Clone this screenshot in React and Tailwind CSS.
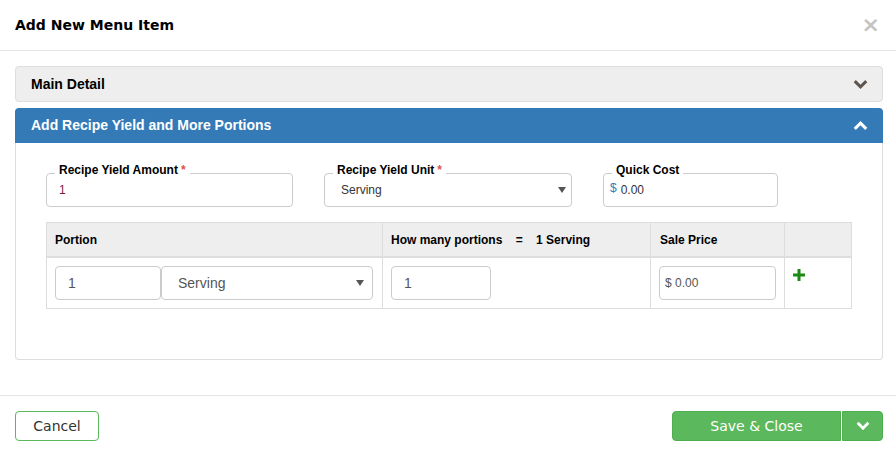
import React from "react";

const ChevronDown = ({ className }) => (
  <svg viewBox="0 0 16 16" className={className} fill="none" stroke="currentColor" strokeWidth="3.2" strokeLinecap="square">
    <path d="M3 5.5 L8 10.5 L13 5.5" />
  </svg>
);

const ChevronUp = ({ className }) => (
  <svg viewBox="0 0 16 16" className={className} fill="none" stroke="currentColor" strokeWidth="3.2" strokeLinecap="square">
    <path d="M3 10.5 L8 5.5 L13 10.5" />
  </svg>
);

const Caret = () => (
  <svg viewBox="0 0 8 6" className="w-[8px] h-[6px]" fill="#555">
    <path d="M0 0 H8 L4 6 Z" />
  </svg>
);

function FloatField({ label, required, width, children }) {
  return (
    <div className={`relative ${width}`}>
      <span className="absolute left-[9px] top-[-10px] bg-white px-[4px] text-[12px] font-bold leading-[14px] text-black">
        {label}
        {required && <span className="text-[#d9534f] ml-[3px]">*</span>}
      </span>
      <div className="h-[34px] border border-[#ccc] rounded-[4px] flex items-center">{children}</div>
    </div>
  );
}

export default function App() {
  return (
    <div className="w-[896px] h-[453px] bg-white flex flex-col" style={{ fontFamily: '"Liberation Sans", Arial, sans-serif' }}>
      {/* header */}
      <div className="h-[51px] border-b border-[#e5e5e5] flex items-center justify-between pl-[15px] pr-[16px] shrink-0">
        <h4 className="text-[14px] font-bold text-black" style={{ fontFamily: '"DejaVu Sans", Verdana, sans-serif' }}>
          Add New Menu Item
        </h4>
        <span className="text-[#c4c4c4] text-[22px] leading-none font-bold" style={{ fontFamily: '"DejaVu Sans", sans-serif' }}>×</span>
      </div>

      {/* body */}
      <div className="pl-[15px] pr-[13px] pt-[15px] pb-[35px] shrink-0">
        <div className="h-[36px] bg-[#eeeeee] border border-[#dddddd] rounded-[4px] flex items-center justify-between pl-[15px] pr-[14px]">
          <span className="text-[14px] font-bold text-black">Main Detail</span>
          <ChevronDown className="w-[15px] h-[15px] text-[#5e554e]" />
        </div>

        <div className="mt-[6px] rounded-[4px]">
          <div className="h-[35px] bg-[#337ab7] rounded-t-[4px] flex items-center justify-between pl-[16px] pr-[15px]">
            <span className="text-[14px] font-bold text-white">Add Recipe Yield and More Portions</span>
            <ChevronUp className="w-[15px] h-[15px] text-white" />
          </div>
          <div className="border border-t-0 border-[#dddddd] rounded-b-[4px] px-[30px] pt-[30px] pb-[50px]">
            <div className="flex gap-[31px]">
              <FloatField label="Recipe Yield Amount" required width="w-[247px]">
                <span className="pl-[12px] text-[12px] text-[#7b1f3f]">1</span>
              </FloatField>
              <FloatField label="Recipe Yield Unit" required width="w-[248px]">
                <div className="flex-1 flex items-center justify-between pl-[16px] pr-[5px]">
                  <span className="text-[12px] text-[#333]">Serving</span>
                  <Caret />
                </div>
              </FloatField>
              <FloatField label="Quick Cost" width="w-[175px]">
                <span className="pl-[6px] text-[12px] text-[#337ab7] self-start mt-[5px]">$</span>
                <span className="pl-[4px] text-[12px] text-[#333]">0.00</span>
              </FloatField>
            </div>

            {/* portions table */}
            <div className="mt-[15px] border border-[#dddddd] text-[12px]">
              <div className="flex h-[35px] bg-[#eeeeee] border-b-2 border-[#dddddd] font-bold text-black">
                <div className="w-[336px] border-r border-[#dddddd] flex items-center pl-[8px]">Portion</div>
                <div className="w-[268px] border-r border-[#dddddd] flex items-center pl-[8px] whitespace-pre">How many portions    =    1 Serving</div>
                <div className="w-[134px] border-r border-[#dddddd] flex items-center pl-[9px]">Sale Price</div>
                <div className="flex-1" />
              </div>
              <div className="flex h-[50px]">
                <div className="w-[336px] border-r border-[#dddddd] pt-[8px] pl-[8px] flex">
                  <div className="w-[106px] h-[34px] border border-[#ccc] rounded-[4px] flex items-center pl-[12px] text-[14px] text-[#555]">1</div>
                  <div className="w-[212px] h-[34px] border border-[#ccc] rounded-[4px] flex items-center justify-between pl-[16px] pr-[8px]">
                    <span className="text-[14px] text-[#555]">Serving</span>
                    <Caret />
                  </div>
                </div>
                <div className="w-[268px] border-r border-[#dddddd] pt-[8px] pl-[8px]">
                  <div className="w-[100px] h-[34px] border border-[#ccc] rounded-[4px] flex items-center pl-[12px] text-[14px] text-[#555]">1</div>
                </div>
                <div className="w-[134px] border-r border-[#dddddd] pt-[8px] pl-[8px]">
                  <div className="w-[117px] h-[34px] border border-[#ccc] rounded-[4px] flex items-center pl-[5px] text-[12px] text-[#555]">$ 0.00</div>
                </div>
                <div className="flex-1 pl-[8px] pt-[11px]">
                  <svg viewBox="0 0 12 12" className="w-[12px] h-[12px]">
                    <path d="M4.5 0 H7.5 V4.5 H12 V7.5 H7.5 V12 H4.5 V7.5 H0 V4.5 H4.5 Z" fill="#1a8a12" />
                  </svg>
                </div>
              </div>
            </div>
          </div>
        </div>
      </div>

      {/* footer */}
      <div className="border-t border-[#e5e5e5] flex-1 flex items-start justify-between pl-[15px] pr-[13px] pt-[15px]" style={{ fontFamily: '"DejaVu Sans", Verdana, sans-serif' }}>
        <button className="w-[84px] h-[30px] border border-[#5cb85c] rounded-[4px] bg-white text-[14px] text-[#333]">Cancel</button>
        <div className="flex gap-[1px]">
          <button className="w-[169px] h-[30px] bg-[#5cb85c] border border-[#4cae4c] rounded-l-[4px] text-white text-[14px]">Save &amp; Close</button>
          <button className="w-[41px] h-[30px] bg-[#5cb85c] border border-[#4cae4c] rounded-r-[4px] flex items-center justify-center">
            <ChevronDown className="w-[14px] h-[14px] text-white" />
          </button>
        </div>
      </div>
    </div>
  );
}
